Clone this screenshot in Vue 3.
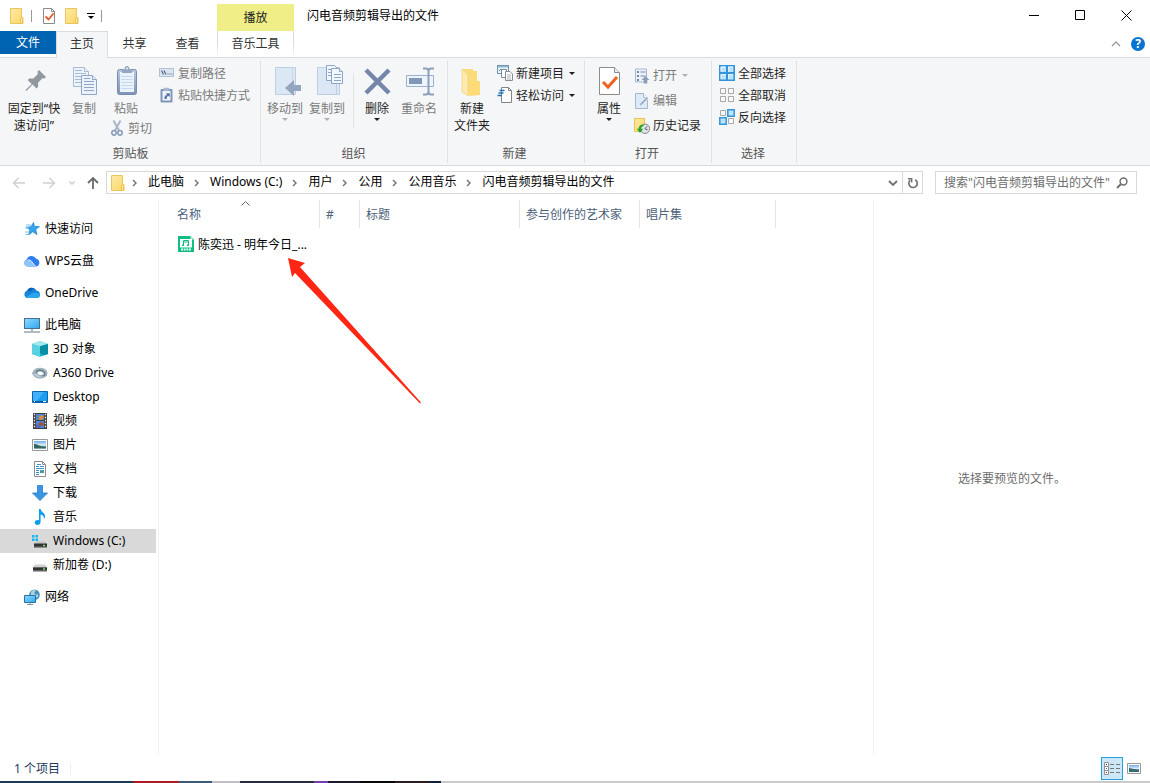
<script setup>
import { ref } from 'vue'

const query = ref('')
const crumbs = ['此电脑', 'Windows (C:)', '用户', '公用', '公用音乐', '闪电音频剪辑导出的文件']
const tree = [
  { icon: 'star', label: '快速访问', top: true },
  { icon: 'wps', label: 'WPS云盘', top: true },
  { icon: 'onedrive', label: 'OneDrive', top: true },
  { icon: 'pc', label: '此电脑', top: true },
  { icon: 'cube', label: '3D 对象' },
  { icon: 'a360', label: 'A360 Drive' },
  { icon: 'desktop', label: 'Desktop' },
  { icon: 'video', label: '视频' },
  { icon: 'picture', label: '图片' },
  { icon: 'document', label: '文档' },
  { icon: 'download', label: '下载' },
  { icon: 'music', label: '音乐' },
  { icon: 'drive-c', label: 'Windows (C:)', selected: true },
  { icon: 'drive', label: '新加卷 (D:)' },
  { icon: 'network', label: '网络', top: true },
]
const columns = [
  { label: '名称', cls: 'c-name' },
  { label: '#', cls: 'c-num' },
  { label: '标题', cls: 'c-title' },
  { label: '参与创作的艺术家', cls: 'c-artist' },
  { label: '唱片集', cls: 'c-album' },
]
</script>

<template>
  <div class="window">
    <svg class="defs" aria-hidden="true">
      <defs>
        <linearGradient id="gFolder" x1="0" y1="0" x2="1" y2="1"><stop offset="0" stop-color="#ffeaa6" /><stop offset="1" stop-color="#fbd768" /></linearGradient>
        <linearGradient id="gScreen" x1="0" y1="0" x2="1" y2="1"><stop offset="0" stop-color="#8ddcff" /><stop offset="1" stop-color="#2fa5f0" /></linearGradient>
        <linearGradient id="gSteel" x1="0" y1="0" x2="0" y2="1"><stop offset="0" stop-color="#b9cadf" /><stop offset="1" stop-color="#7d92b5" /></linearGradient>
        <linearGradient id="gSky" x1="0" y1="0" x2="0" y2="1"><stop offset="0" stop-color="#6eaaf2" /><stop offset=".5" stop-color="#dcecf4" /><stop offset="1" stop-color="#6f9ba3" /></linearGradient>
      </defs>
      <symbol id="folder" viewBox="0 0 16 16">
        <path d="M1.5.5h11v9h1.500v6h-12.500z" fill="url(#gFolder)" stroke="#ecc65c" />
        <path d="M11.500 15.500v-5.500l1-.8 1 .8v5.500z" fill="#ffe9a0" stroke="#e5bb48" stroke-width=".8" />
      </symbol>
      <symbol id="props" viewBox="0 0 16 16">
        <path d="M2.500.5h8l3 3v12h-11z" fill="#fff" stroke="#8b8b8b" />
        <path d="M10.500.5v3h3" fill="none" stroke="#8b8b8b" />
        <path d="M4.500 8.500l3 3 5-6" fill="none" stroke="#e8562a" stroke-width="1.800" />
      </symbol>
      <symbol id="path" viewBox="0 0 16 16">
        <rect x=".5" y="3.500" width="14" height="8" fill="#dbe5f2" stroke="#b4c2d6" />
        <path d="M2.500 5.500l2 4M5 5.500l2 4M8.500 9h1M10.500 9h1M12.500 9h1" stroke="#536783" stroke-width="1.200" />
      </symbol>
      <symbol id="shortcut" viewBox="0 0 16 16">
        <rect x="1.500" y="2" width="12" height="13.500" rx="1" fill="#8297b8" />
        <rect x="3.500" y="4" width="8" height="9.500" fill="#eef4fc" />
        <rect x="4.500" y=".8" width="6" height="3" rx="1" fill="#a8b9d1" />
        <path d="M5.500 12c-.4-2.500.5-3.800 2.500-4l-1-1.800h3.800v3.800l-1.200-1c-1.500.2-2 1.200-1.800 3z" fill="#5876a8" />
      </symbol>
      <symbol id="cut" viewBox="0 0 16 16">
        <path d="M2.500.5l5.500 10M9.500.5l-5.500 10" fill="none" stroke="#a9b7ca" stroke-width="2" />
        <ellipse cx="3" cy="12.800" rx="2.200" ry="2.300" fill="none" stroke="#8a9dbd" stroke-width="1.600" />
        <ellipse cx="9" cy="12.800" rx="2.200" ry="2.300" fill="none" stroke="#8a9dbd" stroke-width="1.600" />
      </symbol>
      <symbol id="newitem" viewBox="0 0 16 16">
        <rect x=".5" y=".5" width="11" height="8" fill="#e6f4fb" stroke="#6f95ab" />
        <path d="M1 1h10v1.500H1z" fill="#8fb9d1" /><path d="M2 6l2-2 2 2" stroke="#4a86a8" fill="none" />
        <path d="M4.500 4.500h5v8h-5z" fill="#fff" stroke="#848d94" />
        <path d="M8.500 6.500h4.500l2.500 2.500v6.500h-7z" fill="#fff" stroke="#848d94" />
        <path d="M10 10h4M10 12h4M10 14h4" stroke="#98a1a8" stroke-width=".8" />
      </symbol>
      <symbol id="easy" viewBox="0 0 16 16">
        <path d="M4.500.5h7l3 3v12h-10z" fill="#fff" stroke="#858585" /><path d="M11.500.5v3h3" fill="none" stroke="#858585" />
        <path d="M2.500 3.500h5M1.500 6h5M.5 8.500h4" stroke="#1e70b8" stroke-width="1.500" />
      </symbol>
      <symbol id="open" viewBox="0 0 16 16">
        <path d="M1.500 1h11v13h-11z" fill="#edf2f8" stroke="#a7b6cb" />
        <path d="M3 3h2v2H3zM3 7h2v2H3zM3 11h2v2H3zM6.500 3.500h5v1h-5zM6.500 7.500h5v1h-5z" fill="#7389ac" />
        <path d="M11.500 8l4 4h-2.200v3.500h-3.600V12H7.500z" fill="#8b9ebb" />
      </symbol>
      <symbol id="edit" viewBox="0 0 16 16">
        <path d="M1.500.5h8l4 4v11h-12z" fill="#dfeaf8" stroke="#a8b7cd" /><path d="M9.500.5v4h4" fill="#fff" stroke="#a8b7cd" />
        <path d="M5 13.500l1-3.200 6.700-6.500 1.800 1.700-6.700 6.800z" fill="#9db0cc" stroke="#fff" stroke-width=".6" />
      </symbol>
      <symbol id="history" viewBox="0 0 16 16">
        <path d="M.5.500h10v13h-10z" fill="url(#gFolder)" stroke="#eac24f" />
        <circle cx="11" cy="10.800" r="4.700" fill="#e0e3e5" stroke="#818990" /><path d="M13 8.300l-2 2.500 2.500 1" fill="none" stroke="#545a60" />
        <path d="M9.500 6.500c-3.200 0-4.700 1.600-4.800 4.200H2.800L6 15l3.200-4.300H7.100c.1-1.700 1-2.400 2.400-2.400z" fill="#28a42b" />
      </symbol>
      <symbol id="selall" viewBox="0 0 16 16">
        <path d="M.8.800h14.400v14.400H.8z" fill="#bce3fb" stroke="#3394dc" stroke-width="1.600" /><path d="M8 0v16M0 8h16" stroke="#3394dc" stroke-width="2" />
        <path d="M2 6.500V2h4.500M9.500 6.500V2H14M2 14V9.500h4.500M9.500 14V9.500H14" stroke="#e4f5ff" fill="none" />
      </symbol>
      <symbol id="selnone" viewBox="0 0 16 16">
        <path d="M1.500 1.500h5v5h-5zM9.500 1.500h5v5h-5zM1.500 9.500h5v5h-5zM9.500 9.500h5v5h-5z" fill="#fafafa" stroke="#a9a9a9" />
      </symbol>
      <symbol id="selinv" viewBox="0 0 16 16">
        <path d="M1.500 1.500h5v5h-5zM9.500 9.500h5v5h-5z" fill="#fafafa" stroke="#a9a9a9" />
        <path d="M8.800.8h6.400v6.400H8.800zM.8 8.800h6.400v6.400H.8z" fill="#bce3fb" stroke="#3394dc" stroke-width="1.500" />
      </symbol>
      <symbol id="star" viewBox="0 0 16 16">
        <path d="M9.500 1.500l1 4 4.900.1-3.700 3 1.300 5-4.300-2.800-4 3 1.300-4.800-3.600-2.800 4.600-.4z" fill="#35a4ea" stroke="#197fc7" stroke-width=".7" />
        <path d="M2 4h5M1 11h4M1.500 13.500h3M1 7h4" stroke="#72c4f4" />
      </symbol>
      <symbol id="wps" viewBox="0 0 16 16">
        <path d="M3.700 13.500a3.700 3.700 0 0 1-1-7.100 5.200 5.200 0 0 1 9.500-.7 4 4 0 0 1 .1 7.800z" fill="#2e7df0" />
        <path d="M3 6.700c2-.8 3.300 0 4.500 1.700l3.800 5.100H3.700C-1 13.300-.6 8 3 6.700z" fill="#8ec5ff" />
        <path d="M4.500 6.800c2.200.2 3.200 1.500 6.800 6.400" fill="none" stroke="#fff" stroke-width=".9" />
      </symbol>
      <symbol id="onedrive" viewBox="0 0 16 16">
        <path d="M3.500 13a3.700 3.700 0 0 1-.5-7.200 5.300 5.300 0 0 1 9.600-.1A3.700 3.700 0 0 1 13 13z" fill="#1683d8" />
        <path d="M1 7.500c1.500-2 4-2 5.500-1l3.500-3C7 1.500 3.800 3.400 3 5.800z" fill="#0d63b4" />
        <path d="M1.200 12.300l7.300-4.300c3-1.500 7.500.2 7.400 2.700-.3 1.800-1.500 2.300-3.200 2.300H3.500c-1 0-1.700-.2-2.300-.7z" fill="#2aa6ec" />
      </symbol>
      <symbol id="pc" viewBox="0 0 16 16">
        <rect x=".5" y="1.500" width="15" height="10" fill="url(#gScreen)" stroke="#48708e" />
        <path d="M7 12h2v2H7z" fill="#a7b4bd" /><path d="M0 15h16" stroke="#8897a5" stroke-width="1.300" />
      </symbol>
      <symbol id="cube" viewBox="0 0 16 16">
        <path d="M0 3l8-2.800L16 3v10l-8 2.800L0 13z" fill="#14b0c5" /><path d="M0 3l8 2.300v10.500L0 13z" fill="#5bd0df" /><path d="M0 3l8-2.800L16 3 8 5.300z" fill="#a3e8ef" /><path d="M8 5.300L16 3v10l-3.500 1.200L8 12z" fill="#078fa6" />
      </symbol>
      <symbol id="a360" viewBox="0 0 16 16">
        <ellipse cx="8" cy="8" rx="6.300" ry="4" fill="#dfe7eb" stroke="#a5b4bd" stroke-width="2.500" />
        <path d="M4 8c.5-3 6-3.500 8-1s0 4.500-3.500 4.500" fill="none" stroke="#667f8d" stroke-width="1.700" />
        <path d="M.5 8c1.500 5 9 7.500 14.500 2-4 2-8 1.500-9.500-1.500z" fill="#b9c9d1" stroke="#8499a4" stroke-width=".6" />
        <ellipse cx="8.300" cy="8.300" rx="2.200" ry="1.400" fill="#fff" />
      </symbol>
      <symbol id="desktop" viewBox="0 0 16 16">
        <path d="M.5 2.500h15v11H.5z" fill="#1b9cf0" stroke="#0867b3" /><path d="M1 3h11L5 12H1z" fill="#41b0f8" /><path d="M1 12.500h14" stroke="#08599a" /><path d="M2 12.500h1m8 0h3" stroke="#fff" />
      </symbol>
      <symbol id="video" viewBox="0 0 16 16">
        <path d="M1 0h14v16H1z" fill="#3c3c43" /><path d="M4 1h8v6H4zM4 8h8v7H4z" fill="#4b86d8" />
        <path d="M7 3l3-1 2 2-2 3H7z" fill="#d88d32" /><path d="M7 10l2-1 3 2-2 2H7z" fill="#a94e30" /><path d="M4 12l3-1 2 4H4z" fill="#5369b6" />
        <path d="M2.500.8v15M13.500.8v15" stroke="#eee" stroke-width="1.300" stroke-dasharray="1.500 1.500" />
      </symbol>
      <symbol id="picture" viewBox="0 0 16 16">
        <path d="M.5 2.500h15v11H.5z" fill="#fff" stroke="#999" /><path d="M2 4h12v8H2z" fill="url(#gSky)" /><path d="M2 7c3 0 5 2 8 2.200l4 .3V11H2z" fill="#33665b" />
      </symbol>
      <symbol id="document" viewBox="0 0 16 16">
        <path d="M2.500.5h8l3 3v12h-11z" fill="#fff" stroke="#8d8d8d" /><path d="M10.500.5v3h3" fill="none" stroke="#8d8d8d" />
        <path d="M4 5.500h3m1 0h4M4 7.500h8M4 9.500h3M4 11.500h3M4 13.500h3M5 3.500h4" stroke="#3793c8" /><path d="M8 9h4v3H8z" fill="#519b97" />
      </symbol>
      <symbol id="download" viewBox="0 0 16 16">
        <path d="M5.500.5h5V8h5L8 15.500.5 8h5z" fill="#3995e5" stroke="#2379c9" stroke-width=".8" />
      </symbol>
      <symbol id="music" viewBox="0 0 16 16">
        <path d="M7 0h1.600c.4 3 4.400 3.800 4.400 7.200 0 1.400-.6 2.300-1.400 3 .8-2.800-.6-4-3-4.700v7.300C8.500 17 2.700 16.800 2.700 13.500c0-2.200 2.400-3 4.300-2.200z" fill="#0c9cf0" />
      </symbol>
      <symbol id="drive" viewBox="0 0 16 16">
        <path d="M3 7.500h10l2 3H1z" fill="#d3d3d3" /><path d="M1 10.300h14v4H1z" fill="#333" /><path d="M1 14h14" stroke="#9a9a9a" /><path d="M11 12h2" stroke="#69e270" stroke-width="1.500" />
      </symbol>
      <symbol id="drive-c" viewBox="0 0 16 16">
        <path d="M0 2h2.500v2.500H0zM3.500 2H6v2.500H3.500zM0 5.500h2.500V8H0zM3.500 5.500H6V8H3.500z" fill="#19b5f2" />
        <path d="M4 8.500h9l2 2.500H2z" fill="#c4c4c4" /><path d="M2 10.500h13v4H2z" fill="#333" /><path d="M2 14.200h13" stroke="#929292" /><path d="M11 12.500h2" stroke="#69e270" stroke-width="1.500" />
      </symbol>
      <symbol id="network" viewBox="0 0 16 16">
        <circle cx="10.500" cy="5.700" r="5.300" fill="#4e8fb5" /><path d="M7 3c2-2.500 4-2.300 5-1.500L10 4l2 2 2-1v3l-3 1-4-3z" fill="#a8d4e7" />
        <path d="M.5 6.500h11v7H.5z" fill="url(#gScreen)" stroke="#28749f" /><path d="M3 15.500h6M6 13.500v2" stroke="#7c98a9" />
      </symbol>
      <symbol id="audio" viewBox="0 0 16 16">
        <path d="M0 0h12.500L16 3.500V16H0z" fill="#10bd82" /><path d="M12.500 0v3.500H16z" fill="#b7ead8" /><path d="M2 3h12v8.500H2z" fill="#fff" />
        <path d="M5.500 9.500v-5h5v4.500M5.500 6h5" fill="none" stroke="#10bd82" /><path d="M4 8.500h2v1.500H4zM9 8.500h2v1.500H9z" fill="#10bd82" /><path d="M3 13.500h10" stroke="#e0fff4" stroke-width="2" stroke-dasharray="2 .7" />
      </symbol>
    </svg>

    <header class="titlebar">
      <div class="quick">
        <svg class="i16"><use href="#folder" /></svg>
        <span class="bar"></span>
        <button class="plain" aria-label="属性"><svg class="i16"><use href="#props" /></svg></button>
        <button class="plain" aria-label="新建文件夹"><svg class="i16"><use href="#folder" /></svg></button>
        <button class="plain more" aria-label="自定义快速访问工具栏"><svg width="8" height="8" viewBox="0 0 8 8"><path d="M0 1.500h8" stroke="#000" /><path d="M1 4h6L4 7z" /></svg></button>
        <span class="bar"></span>
      </div>
      <div class="context">播放</div>
      <h1>闪电音频剪辑导出的文件</h1>
      <div class="controls">
        <button aria-label="最小化"><svg width="11" height="11" viewBox="0 0 11 11"><path d="M0 5.500h10" stroke="#000" /></svg></button>
        <button aria-label="最大化"><svg width="11" height="11" viewBox="0 0 11 11"><path d="M.5.500h9v9h-9z" fill="none" stroke="#000" /></svg></button>
        <button aria-label="关闭"><svg width="11" height="11" viewBox="0 0 11 11"><path d="M.5.500l10 10M10.500.5l-10 10" stroke="#000" /></svg></button>
      </div>
    </header>

    <nav class="tabs">
      <button class="file">文件</button>
      <button class="home">主页</button>
      <button>共享</button>
      <button>查看</button>
      <button class="tools">音乐工具</button>
      <div class="help">
        <button class="plain" aria-label="折叠功能区"><svg width="10" height="8" viewBox="0 0 10 8"><path d="M1 6l4-4 4 4" fill="none" stroke="#999" stroke-width="1.300" /></svg></button>
        <button class="plain question" aria-label="帮助">?</button>
      </div>
    </nav>

    <section class="ribbon">
      <div class="group clipboard">
        <div class="tools-row">
          <button class="big pin">
            <svg width="62" height="38"><g transform="translate(22 8)"><path d="M14 0l7 7-1.500 1.500-2-.3-4.500 4.500.2 4-1.700 1.700-4-4L2 20.500l-1.500.5.5-1.500L6.700 14l-4-4 1.500-1.600 4.200.1 4.500-4.500-.4-2.500z" fill="#8f999f" /></g></svg>
            <span>固定到“快速访问”</span>
          </button>
          <button class="big copy" disabled>
            <svg width="38" height="38"><g stroke="#a9bad3" fill="#eaf2fc"><path d="M8.500 5.500h11l4 4v15h-15z" /><path d="M19.500 5.500v4h4" /><path d="M10 11.500h11M10 14.500h11M10 17.500h11M10 20.500h11M10 8.500h7" /><path d="M16.500 13.500h11l4 4v15h-15z" stroke="#8fa5c5" /><path d="M27.500 13.500v4h4M19 19.500h10M19 22.500h10M19 25.500h10M19 28.500h10M19 16.500h6" stroke="#8fa5c5" /></g></svg>
            <span>复制</span>
          </button>
          <div class="paste-col">
            <button class="big paste" disabled>
              <svg width="46" height="38"><rect x="14.500" y="7.500" width="19" height="25" rx="2" fill="url(#gSteel)" stroke="#788dae" /><path d="M17 10h14v20H17z" fill="#e9f2fd" /><path d="M18 14.500h12M18 17.500h12M18 20.500h12M18 23.500h12M18 26.500h12" stroke="#c7d7ec" /><path d="M19 11V7h2.500c0-4 5-4 5 0H29v4z" fill="#94a6c0" /><circle cx="24" cy="6.500" r="1" fill="#eef3f9" /></svg>
              <span>粘贴</span>
            </button>
            <button class="small cut" disabled><svg class="i16"><use href="#cut" /></svg>剪切</button>
          </div>
          <div class="stack">
            <button class="small" disabled><svg class="i16"><use href="#path" /></svg>复制路径</button>
            <button class="small" disabled><svg class="i16"><use href="#shortcut" /></svg>粘贴快捷方式</button>
          </div>
        </div>
        <div class="caption">剪贴板</div>
      </div>

      <div class="group organize">
        <div class="tools-row">
          <button class="big" disabled>
            <svg width="42" height="38"><path d="M11.500 5.500h20v27h-20z" fill="#dce7f6" stroke="#bfcee2" /><path d="M28.500 6v15" stroke="#cbd8e9" /><path d="M21 26l9-8v5h7v6h-7v5z" fill="#93a5bf" /></svg>
            <span>移动到</span><i class="caret"></i>
          </button>
          <button class="big" disabled>
            <svg width="42" height="38"><path d="M11.500 5.500h22v27h-22z" fill="#dce7f6" stroke="#bfcee2" /><path d="M30.500 22v10" stroke="#bfcee2" /><g stroke="#8fa5c5" fill="#f1f7ff"><path d="M20.500 3.500h8l3 3v12h-11z" /><path d="M22 7.500h7M22 10.500h7M22 13.500h7" /><path d="M25.500 6.500h8l3 3v12h-11z" /><path d="M33.500 6.500v3h3M28 12.500h7M28 15.500h7M28 18.500h7" /></g></svg>
            <span>复制到</span><i class="caret"></i>
          </button>
          <span class="divider"></span>
          <button class="big">
            <svg width="42" height="38"><path d="M10 8l23 23M33 8L10 31" stroke="#7487aa" stroke-width="4.500" /></svg>
            <span>删除</span><i class="caret"></i>
          </button>
          <button class="big" disabled>
            <svg width="42" height="38"><path d="M8.500 13.500h27v11h-27z" fill="#edf4fd" stroke="#9db0cb" /><path d="M11 16h13v6H11z" fill="#8296b7" /><path d="M25 6.500h3q2.500 0 2.500 3v20q0 3-2.500 3h-3M36 6.500h-3q-2.500 0-2.500 3v20q0 3 2.500 3h3" fill="none" stroke="#8c9fbc" stroke-width="2" /></svg>
            <span>重命名</span>
          </button>
        </div>
        <div class="caption">组织</div>
      </div>

      <div class="group create">
        <div class="tools-row">
          <button class="big folder">
            <svg width="46" height="38"><path d="M13 7h11v22l-5 4-6-3z" fill="#f8dc80" /><path d="M20 9h8v10h3v14l-11 1z" fill="#fcdb78" /><path d="M13 7l6 6v21l-6-4z" fill="#ffeaae" stroke="#edcd74" stroke-width=".6" /></svg>
            <span>新建<br>文件夹</span>
          </button>
          <div class="stack">
            <button class="small"><svg class="i16"><use href="#newitem" /></svg>新建项目<i class="caret"></i></button>
            <button class="small"><svg class="i16"><use href="#easy" /></svg>轻松访问<i class="caret"></i></button>
          </div>
        </div>
        <div class="caption">新建</div>
      </div>

      <div class="group open">
        <div class="tools-row">
          <button class="big prop">
            <svg width="48" height="38"><path d="M14.500 5.500h15l5 5v22h-20z" fill="#fff" stroke="#8d8d8d" /><path d="M29.500 5.500v5h5" fill="#eee" stroke="#8d8d8d" /><path d="M18 20l5 5 9-10" fill="none" stroke="#ee6222" stroke-width="3" /></svg>
            <span>属性</span><i class="caret"></i>
          </button>
          <div class="stack">
            <button class="small" disabled><svg class="i16"><use href="#open" /></svg>打开<i class="caret"></i></button>
            <button class="small" disabled><svg class="i16"><use href="#edit" /></svg>编辑</button>
            <button class="small"><svg class="i16"><use href="#history" /></svg>历史记录</button>
          </div>
        </div>
        <div class="caption">打开</div>
      </div>

      <div class="group select">
        <div class="tools-row">
          <div class="stack">
            <button class="small"><svg class="i16"><use href="#selall" /></svg>全部选择</button>
            <button class="small"><svg class="i16"><use href="#selnone" /></svg>全部取消</button>
            <button class="small"><svg class="i16"><use href="#selinv" /></svg>反向选择</button>
          </div>
        </div>
        <div class="caption">选择</div>
      </div>
    </section>

    <div class="location">
      <div class="history-nav">
        <button class="plain back" aria-label="后退"><svg width="14" height="12" viewBox="0 0 14 12"><path d="M13 6H2M6.500 1L1.500 6l5 5" fill="none" stroke="#d0d0d0" stroke-width="1.500" /></svg></button>
        <button class="plain fwd" aria-label="前进"><svg width="14" height="12" viewBox="0 0 14 12"><path d="M1 6h11M7.500 1l5 5-5 5" fill="none" stroke="#d0d0d0" stroke-width="1.500" /></svg></button>
        <button class="plain recent" aria-label="最近浏览的位置"><svg width="8" height="6" viewBox="0 0 8 6"><path d="M1.500 1.500L4 4l2.500-2.500" fill="none" stroke="#ccc" stroke-width="1.500" /></svg></button>
        <button class="plain up" aria-label="上移"><svg width="14" height="14" viewBox="0 0 14 14"><path d="M7 13V2M2 7l5-5 5 5" fill="none" stroke="#6b6b6b" stroke-width="1.800" /></svg></button>
      </div>
      <div class="address">
        <svg class="i16"><use href="#folder" /></svg>
        <template v-for="c in crumbs" :key="c">
          <svg class="chev" width="26" height="10" viewBox="0 0 26 10"><path d="M11 2l3 3-3 3" fill="none" stroke="#707070" stroke-width="1.400" /></svg>
          <a href="#">{{ c }}</a>
        </template>
        <button class="plain drop" aria-label="以前的位置"><svg width="10" height="8" viewBox="0 0 10 8"><path d="M1 2l4 4 4-4" fill="none" stroke="#707070" stroke-width="1.800" /></svg></button>
        <button class="plain refresh" aria-label="刷新"><svg width="12" height="12" viewBox="0 0 12 12"><path d="M8.300 2.800A4.200 4.200 0 1 1 3.200 3.200" fill="none" stroke="#707070" stroke-width="1.700" /><path d="M1 1.700h3.700v3.800" fill="none" stroke="#707070" stroke-width="1.400" /></svg></button>
      </div>
      <label class="search">
        <input v-model="query" aria-label="搜索" placeholder="搜索&quot;闪电音频剪辑导出的文件&quot;">
        <svg width="12" height="12" viewBox="0 0 12 12"><circle cx="7.500" cy="4.500" r="3.400" fill="none" stroke="#707070" stroke-width="1.500" /><path d="M5 7L1 11" stroke="#707070" stroke-width="2" /></svg>
      </label>
    </div>

    <div class="body">
      <nav class="sidebar">
        <a v-for="(n, i) in tree" :key="i" href="#" :class="{ top: n.top, selected: n.selected }">
          <svg class="i16"><use :href="'#' + n.icon" /></svg><span>{{ n.label }}</span>
        </a>
      </nav>

      <main class="files">
        <svg class="sort" width="9" height="5" viewBox="0 0 9 5"><path d="M.5 4.500l4-4 4 4" fill="none" stroke="#666" /></svg>
        <table>
          <thead>
            <tr><th v-for="c in columns" :key="c.cls" :class="c.cls">{{ c.label }}</th></tr>
          </thead>
          <tbody>
            <tr>
              <td><div class="entry"><svg class="i16"><use href="#audio" /></svg>陈奕迅 - 明年今日_...</div></td>
              <td></td><td></td><td></td><td></td>
            </tr>
          </tbody>
        </table>
        <svg class="pointer" width="136" height="150" viewBox="0 0 136 150"><path d="M1 1l17 5-5 4 121 135.500-1 1L8 16l-3 4z" fill="#ff2713" /></svg>
      </main>

      <aside class="preview">选择要预览的文件。</aside>
    </div>

    <footer class="status">
      <span class="count">1 个项目</span>
      <div class="views">
        <button class="on" aria-label="详细信息"><svg width="16" height="14" viewBox="0 0 16 14"><path d="M.5.500h4v12h-4zM.5 4.500h4M.5 8.500h4" fill="#fff" stroke="#929292" /><path d="M2 2.500h1" stroke="#333" /><path d="M2 6.500h1" stroke="#36c" /><path d="M2 10.500h1" stroke="#c22" /><path d="M6 2.500h4M12 2.500h4M6 6.500h4M12 6.500h4M6 10.500h4M12 10.500h4" stroke="#777" /></svg></button>
        <button aria-label="大图标"><svg class="i16" viewBox="0 0 16 16"><path d="M1.500 2.500h13v10h-13z" fill="#fff" stroke="#999" /><path d="M3 4h10v7H3z" fill="url(#gSky)" /><path d="M3 7l5 1 5 .5V11H3z" fill="#356a72" /></svg></button>
      </div>
    </footer>
    <div class="strip"></div>
  </div>
</template>

<style>
body { background: #fff; }
</style>

<style scoped>
.window { display: flex; flex-direction: column; min-height: 100vh; box-sizing: border-box; color: #000; font: 12px/17px "Noto Sans", "Noto Sans CJK SC", sans-serif; }
.defs { position: absolute; width: 0; height: 0; }
button { font: inherit; color: inherit; background: none; border: 0; padding: 0; margin: 0; white-space: nowrap; }
a { color: inherit; text-decoration: none; white-space: nowrap; }
svg { display: block; flex: none; }
.i16 { width: 16px; height: 16px; }
.plain { display: flex; align-items: center; justify-content: center; }

.titlebar { display: flex; height: 31px; }
.quick { width: 217px; display: flex; align-items: center; padding-left: 9px; box-sizing: border-box; }
.quick .bar { width: 1px; height: 12px; background: #9a9a9a; margin: 0 9px 0 6px; }
.quick .plain { margin-right: 7px; }
.quick .more { margin-right: 0; }
.context { width: 77px; height: 27px; margin-top: 4px; background: #f0ee86; text-align: center; line-height: 27px; color: #222; }
h1 { margin: 0 0 0 13px; flex: 1; font-size: 12px; font-weight: 400; line-height: 32px; }
.controls { display: flex; padding-right: 1px; }
.controls button { width: 46px; display: flex; align-items: center; justify-content: center; }

.tabs { display: flex; height: 27px; box-sizing: border-box; border-bottom: 1px solid #dadbdc; color: #333; }
.tabs > button { width: 53px; height: 26px; line-height: 26px; text-align: center; }
.tabs .file { width: 56px; height: 23px; line-height: 23px; background: #0063b1; color: #fff; }
.tabs .home { width: 52px; height: 27px; line-height: 24px; box-sizing: border-box; border: 1px solid #dadbdc; border-bottom: 0; background: #f5f6f7; padding-bottom: 2px; }
.tabs .tools { width: 77px; margin-left: 3px; box-sizing: border-box; border: solid; border-width: 0 1px; border-image: linear-gradient(#dadbdc 50%, #fff) 1; }
.help { margin-left: auto; padding-right: 5px; display: flex; align-items: center; gap: 10px; }
.question { width: 14px; height: 14px; border-radius: 50%; background: #0973d2; color: #fff; font-weight: 700; line-height: 14px; }

.ribbon { display: flex; height: 108px; box-sizing: border-box; background: #f5f6f7; border-bottom: 1px solid #dadbdc; }
.group { display: flex; flex-direction: column; box-sizing: border-box; padding-top: 2px; border-right: 1px solid #e2e3e4; margin: 2px 0; }
.tools-row { display: flex; height: 84px; align-items: flex-start; color: #1e1e1e; }
.caption { text-align: center; color: #555; line-height: 17px; margin-top: -1px; }
.clipboard { width: 261px; padding-left: 3px; }
.organize { width: 187px; padding-left: 3px; }
.create { width: 137px; padding-left: 1px; }
.open { width: 127px; }
.select { width: 85px; padding-left: 7px; }
.clipboard .caption { padding-right: 2px; }
.organize .caption, .create .caption { padding-right: 4px; }
.open .caption { padding-right: 2px; }
.select .caption { padding-right: 9px; }
.big { width: 42px; display: flex; flex-direction: column; align-items: center; white-space: normal; }
.big.pin { width: 62px; }
.big.copy { width: 38px; }
.big.paste, .big.folder { width: 46px; }
.big.prop { width: 48px; }
.pin span { width: 56px; }
.big span { line-height: 17px; }
.copy span, .folder span, .organize .big span { white-space: nowrap; }
button:disabled { color: #7b7b7b; }
button:disabled .caret { border-top-color: #b0b0b0; }
.caret { width: 0; height: 0; border: 3px solid transparent; border-top-color: #1e1e1e; border-bottom: 0; }
.big .caret { margin-top: 1px; }
.small { display: flex; align-items: center; height: 22px; gap: 3px; }
.small .caret { margin-left: 2px; }
.paste-col { width: 52px; }
.small.cut { margin-left: 8px; gap: 1px; }
.clipboard .stack { padding-left: 4px; }
.create .stack { padding-left: 2px; }
.open .stack { padding: 1px 0 0 1px; }
.open .small { height: 25px; }
.divider { width: 1px; height: 55px; background: #e2e3e4; margin: 11px 2px 0 5px; }

.location { display: flex; align-items: center; height: 34px; box-sizing: border-box; padding: 0 13px 1px 0; }
.history-nav { display: flex; align-items: center; width: 106px; }
.back { margin-left: 12px; }
.fwd { margin-left: 16px; }
.recent { margin-left: 12px; }
.up { margin-left: 10px; }
.address { flex: 1; height: 23px; box-sizing: border-box; display: flex; align-items: center; border: 1px solid #d9d9d9; padding-left: 3px; }
.address a { padding-bottom: 2px; }
.address .i16 + .chev { margin-left: -4px; }
.drop { margin-left: auto; width: 18px; height: 21px; }
.refresh { width: 20px; height: 21px; border-left: 1px solid #d9d9d9; }
.search { width: 202px; height: 23px; box-sizing: border-box; margin-left: 12px; border: 1px solid #d9d9d9; display: flex; align-items: center; padding: 0 8px; }
.search input { flex: 1; min-width: 0; border: 0; outline: 0; padding: 0; font: inherit; background: none; }
.search input::placeholder { color: #6d6d6d; opacity: 1; }

.body { flex: 1; display: flex; }
.sidebar { width: 159px; box-sizing: border-box; border-right: 1px solid #f2f2f2; padding: 9px 2px 0 0; }
.sidebar a { display: flex; align-items: center; height: 24px; padding-left: 32px; gap: 5px; }
.sidebar span { padding-bottom: 2px; }
.sidebar a.top { padding-left: 24px; margin-top: 8px; }
.sidebar a.selected { background: #d9d9d9; }
.files { flex: 1; position: relative; }
table { border-collapse: separate; border-spacing: 0; table-layout: fixed; width: 617px; }
th { box-sizing: border-box; height: 28px; padding: 0 0 0 6px; text-align: left; font-weight: 400; color: #4c607a; border-right: 1px solid #e5e5e5; white-space: nowrap; }
.c-name { width: 161px; padding-left: 18px; }
.c-num { width: 40px; }
.c-title { width: 160px; }
.c-artist { width: 120px; }
.c-album { width: 136px; }
td { padding: 6px 0 0; }
.entry { display: flex; align-items: center; gap: 4px; height: 20px; padding-left: 19px; white-space: nowrap; }
.sort { position: absolute; left: 82px; top: 1px; }
.pointer { position: absolute; left: 128px; top: 57px; }
.preview { width: 277px; box-sizing: border-box; border-left: 1px solid #f2f2f2; display: flex; align-items: center; justify-content: center; color: #6d6d6d; }

.status { display: flex; align-items: center; height: 25px; padding: 0 5px 0 14px; color: #1e395b; }
.count { padding-right: 10px; border-right: 1px solid #eee; line-height: 12px; }
.views { margin-left: auto; display: flex; }
.views button { width: 22px; height: 23px; display: flex; align-items: center; justify-content: center; }
.views .on { box-sizing: border-box; background: #cce8f6; border: 1px solid #26a0da; }
.strip { height: 2px; background: linear-gradient(90deg, #1d3a58 0 133px, #b5171d 133px 179px, #3a5a7c 179px 212px, #c0c0c4 212px 240px, #29293d 240px 314px, #7a3cb4 314px 328px, #1c1a28 328px 360px, #08080a 360px 395px, #2b1c22 395px 430px, #10203c 430px 441px, #cacaca 441px); }
</style>
